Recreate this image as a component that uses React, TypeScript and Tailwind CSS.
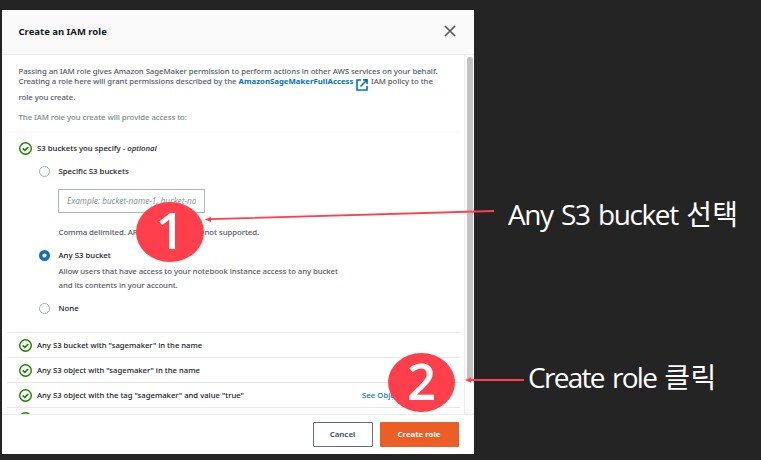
import type { ReactNode } from 'react';

function StatusCheck() {
  return (
    <svg className="h-[13px] w-[13px] shrink-0" viewBox="0 0 13 13" fill="none" stroke="#1d8102">
      <circle cx="6.5" cy="6.5" r="5.8" strokeWidth="1.4" />
      <path d="M3.7 6.4 5.8 8.4 9.2 5" strokeWidth="1.6" />
    </svg>
  );
}

function Radio({ checked = false }: { checked?: boolean }) {
  return (
    <svg className="h-[11px] w-[11px] shrink-0" viewBox="0 0 11 11" fill="none">
      {checked ? (
        <circle cx="5.5" cy="5.5" r="3.8" stroke="#146eb4" strokeWidth="3.4" />
      ) : (
        <circle cx="5.5" cy="5.5" r="5" stroke="#95a5a6" strokeWidth="0.9" />
      )}
    </svg>
  );
}

function PermissionRow({ children, action }: { children?: ReactNode; action?: string }) {
  return (
    <div className="flex h-[25px] shrink-0 items-center border-t border-[#e6e9e9] pl-[12px] font-medium text-[#16191f]">
      <StatusCheck />
      <span className="ml-[5px] w-[325px] text-[7.7px]">{children}</span>
      {action && <span className="text-[7.8px] text-[#1273bb]">{action}</span>}
    </div>
  );
}

function StepBadge({ className, children }: { className: string; children: ReactNode }) {
  return (
    <div
      className={`absolute flex items-center justify-center rounded-[50%] bg-[#ff404c] pb-[5px] font-['Open_Sans',sans-serif] text-[51px] leading-none font-semibold text-white ${className}`}
    >
      {children}
    </div>
  );
}

export default function App() {
  return (
    <div className="relative h-[460px] w-[761px] overflow-hidden bg-[#242424] pt-[10px] pl-[2px] font-['Noto_Sans',sans-serif] text-[7.8px] leading-[10px] whitespace-nowrap text-[#545b64]">
      <section className="flex h-[444px] w-[472px] flex-col bg-white">
        <header className="flex h-[45px] shrink-0 items-center justify-between border-b border-[#eaeded] bg-[#fafafa] pr-[18px] pl-[16.5px]">
          <h1 className="text-[9.5px] font-bold text-[#16191f]">Create an IAM role</h1>
          <svg className="-mt-[3px] h-3 w-3" viewBox="0 0 12 12" stroke="#545b64" strokeWidth="1.7">
            <path d="m1 1 10 10M11 1 1 11" />
          </svg>
        </header>

        <div className="flex h-[359px] shrink-0 overflow-hidden">
          <main className="flex w-[462px] shrink-0 flex-col pr-[4px] pl-[5px]">
            <div className="flex h-[78px] shrink-0 flex-col border-b-2 border-[#fafafa] pt-[11px] pl-[11.5px] font-medium tracking-[-0.065px]">
              <p>
                Passing an IAM role gives Amazon SageMaker permission to perform actions in other AWS services on your
                behalf.
              </p>
              <p className="flex h-[10px]">
                <span className="w-[220px]">Creating a role here will grant permissions described by the</span>
                <b className="w-[115px] tracking-normal text-[#0073bb]">AmazonSageMakerFullAccess</b>
                <svg
                  className="mt-[2.5px] ml-[2px] h-3 w-3 shrink-0"
                  viewBox="0 0 12 12"
                  fill="none"
                  stroke="#0073bb"
                  strokeWidth="1.6"
                >
                  <path d="M5 1H1v10h10V7M7 .9h4.1V5M11 1 4.5 7.5" />
                </svg>
                <span className="ml-[3.5px]">IAM policy to the</span>
              </p>
              <p className="mt-[6px]">role you create.</p>
              <p className="mt-[10px] text-[#7b8988]">The IAM role you create will provide access to:</p>
            </div>

            <div className="flex h-[199px] shrink-0 flex-col pl-[12px] font-medium text-[#16191f]">
              <div className="mt-[8px] flex h-[14px] items-center">
                <StatusCheck />
                <span className="-mt-px ml-[5px]">
                  S3 buckets you specify - <i>optional</i>
                </span>
              </div>
              <div className="flex flex-col pl-[20px]">
                <label className="mt-[10px] flex h-[12px] items-center gap-[8.5px]">
                  <Radio />
                  <span className="-mt-px">Specific S3 buckets</span>
                </label>
                <div className="mt-[12px] ml-[19px] flex h-[24px] w-[147px] items-center overflow-hidden border border-[#aab7b8] px-[8px] font-normal text-[#879596] italic">
                  <span className="w-full overflow-hidden text-[8.2px]">Example: bucket-name-1, bucket-na</span>
                </div>
                <p className="mt-[14px] ml-[19.5px] flex h-[10px] tracking-[-0.065px] text-[#545b64]">
                  <span className="w-[146px]">Comma delimited. ARNs</span>
                  <span>not supported.</span>
                </p>
                <label className="mt-[12px] flex h-[12px] items-center gap-[8.5px]">
                  <Radio checked />
                  <span className="-mt-px">Any S3 bucket</span>
                </label>
                <p className="mt-[2.5px] ml-[19.5px] leading-[14.5px] tracking-[-0.075px] text-[#545b64]">
                  Allow users that have access to your notebook instance access to any bucket
                  <br />
                  and its contents in your account.
                </p>
                <label className="mt-[9.5px] flex h-[12px] items-center gap-[8.5px]">
                  <Radio />
                  <span className="-mt-px">None</span>
                </label>
              </div>
            </div>

            <PermissionRow>Any S3 bucket with &quot;sagemaker&quot; in the name</PermissionRow>
            <PermissionRow>Any S3 object with &quot;sagemaker&quot; in the name</PermissionRow>
            <PermissionRow action="See Objects">
              Any S3 object with the tag &quot;sagemaker&quot; and value &quot;true&quot;
            </PermissionRow>
            <div className="h-[25px] shrink-0 border-t border-[#e6e9e9] pt-[4px] pl-[12px]">
              <StatusCheck />
            </div>
          </main>
          <div className="w-[10px] shrink-0 border-l border-[#ededed] bg-[#fafafa] pt-[1.5px] pl-[2px]">
            <div className="h-[323px] w-[6px] rounded-full bg-[#c1c1c1]" />
          </div>
        </div>

        <footer className="flex h-[40px] shrink-0 items-center justify-end gap-[7px] border-t border-[#eaeded] pr-[15px] font-bold">
          <button className="h-[25px] w-[60px] rounded-[1px] border border-[#687078] bg-white pr-[1px] pb-[2px] text-[#545b64]">
            Cancel
          </button>
          <button className="h-[25px] w-[79px] rounded-[1px] bg-[#eb5f27] pr-[1px] pb-[2px] text-white">Create role</button>
        </footer>
      </section>

      <StepBadge className="top-[202px] left-[136px] h-[60px] w-[68px]">1</StepBadge>
      <StepBadge className="top-[353px] left-[388px] h-[59px] w-[67px]">2</StepBadge>

      <svg className="absolute top-0 left-0 h-[460px] w-[761px]" stroke="#ff404c" fill="#ff404c" strokeWidth="1.8">
        <path d="M210 219.2 494 211M470 380H524" />
        <path d="m205 219.5 6-2.8.1 5.2zM465 380l6-2.8v5.6z" stroke="none" />
      </svg>

      <p className="absolute top-[194px] left-[508px] font-['Open_Sans','Noto_Sans_CJK_KR',sans-serif] text-[28px] leading-[40px] font-medium tracking-[-1.4px] text-white [word-spacing:2.5px]">
        Any S3 bucket <span className="font-normal tracking-[0.4px]">선택</span>
      </p>
      <p className="absolute top-[357px] left-[528px] font-['Open_Sans','Noto_Sans_CJK_KR',sans-serif] text-[28px] leading-[40px] font-medium tracking-[-1.7px] text-white [word-spacing:2.5px]">
        Create role <span className="font-normal tracking-[0.4px]">클릭</span>
      </p>
    </div>
  );
}
